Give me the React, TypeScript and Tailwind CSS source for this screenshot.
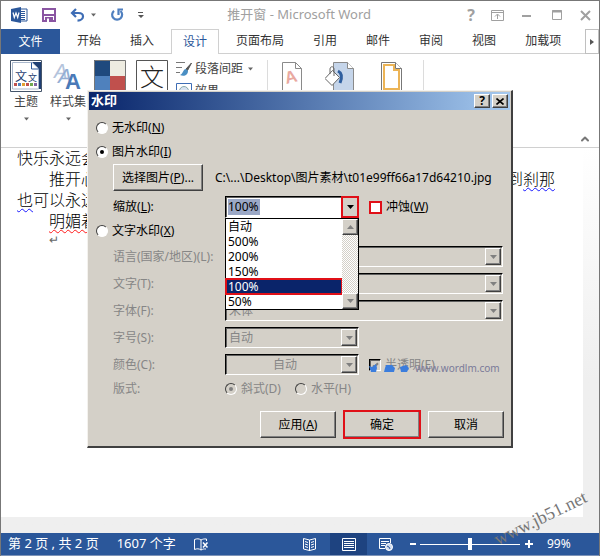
import { useState } from 'react';
import type { ReactNode } from 'react';
import { ChevronUp } from 'lucide-react';

const TABS = ['开始', '插入', '设计', '页面布局', '引用', '邮件', '审阅', '视图', '加载项'];
const SCALES = ['自动', '500%', '200%', '150%', '100%', '50%'];

// classic Windows bevels
const RAISED = 'bg-[#d4d0c8] border border-t-white border-l-white border-r-[#404040] border-b-[#404040] shadow-[inset_-1px_-1px_0_#808080]';
const SUNKEN = 'border border-t-black border-l-black border-r-white border-b-white shadow-[inset_1px_1px_0_#606060]';

function Caret({ className = 'text-[#666]', up = false }: { className?: string; up?: boolean }) {
  return (
    <svg width="7" height="4" viewBox="0 0 7 4" className={className} aria-hidden="true">
      <path d={up ? 'M0 4 3.5 0 7 4z' : 'M0 0h7L3.5 4z'} fill="currentColor" />
    </svg>
  );
}

function TitleBar() {
  return (
    <header className="flex h-7 items-center pl-2.5 pr-2 text-[#a0a0a0]">
      <div className="flex w-[120px] items-center">
        <svg width="17" height="16" viewBox="0 0 17 16" className="shrink-0" aria-hidden="true">
          <path d="M9 2h7v12H9z" fill="#fff" stroke="#2b579a" />
          <path d="M10 4.500h4M10 6.500h4M10 8.500h4M10 10.500h4M10 12.500h4" stroke="#2b579a" />
          <path d="M0 2 10 0v16L0 14z" fill="#2b579a" />
          <path d="M2 5.500 3.300 10.500 5 6l1.700 4.500L8 5.500" fill="none" stroke="#fff" strokeWidth="1.200" />
        </svg>
        <button aria-label="保存" className="ml-3.5">
          <svg width="14" height="14" viewBox="0 0 14 14">
            <path d="M1 1h12v12H1z" fill="#fff" stroke="#8a55a2" strokeWidth="2" />
            <path d="M1 7h12" stroke="#8a55a2" strokeWidth="2" />
            <path d="M3 9h8v5H3z" fill="#8a55a2" />
            <path d="M5 10.500h2V14H5z" fill="#fff" />
          </svg>
        </button>
        <button aria-label="撤消" className="ml-3.5 flex items-center gap-1.5">
          <svg width="15" height="14" viewBox="0 0 15 14" fill="none" stroke="#3e6db5" strokeWidth="2.200">
            <path d="M6 1 2 5l4 4" />
            <path d="M2 5h6.500c3 0 4.500 1.500 4.500 3.500S11 12.500 7.500 12.700" />
          </svg>
          <Caret className="w-[5px] text-[#666]" />
        </button>
        <button aria-label="重复" className="ml-3.5">
          <svg width="14" height="14" viewBox="0 0 14 14" fill="none" stroke="#4f7fbf" strokeWidth="2.200">
            <path d="M4 2.800A5 5 0 1 0 10.500 3" />
            <path d="M13 1.500H8.500V7" />
          </svg>
        </button>
        <button aria-label="自定义快速访问工具栏" className="ml-3.5 text-[#555]">
          <svg width="6" height="7" viewBox="0 0 6 7"><path d="M0 0h5v1H0zM0 3h6L3 6z" fill="currentColor" /></svg>
        </button>
      </div>
      <h1 className="flex-1 text-center text-[13px]">推开窗 - Microsoft Word</h1>
      <div className="flex items-center gap-4">
        <button aria-label="帮助" className="text-base font-bold leading-none">?</button>
        <button aria-label="功能区显示选项">
          <svg width="13" height="11" viewBox="0 0 13 11" fill="none" stroke="currentColor">
            <path d="M.5.5h12v10H.5zM.5 2.500h12M6.500 9V4.500M4 6.500l2.500-2.500L9 6.500" />
          </svg>
        </button>
        <button aria-label="最小化" className="px-0.5">
          <svg width="10" height="10" viewBox="0 0 10 10"><path d="M0 6h9" stroke="currentColor" strokeWidth="2" /></svg>
        </button>
        <button aria-label="最大化" className="px-0.5">
          <svg width="10" height="10" viewBox="0 0 10 10" fill="none" stroke="currentColor"><path d="M.5.5h9v9h-9z" /><path d="M0 1.500h10" strokeWidth="2" /></svg>
        </button>
        <button aria-label="关闭">
          <svg width="11" height="11" viewBox="0 0 11 11" stroke="currentColor" strokeWidth="2"><path d="M1 1l9 9M10 1l-9 9" /></svg>
        </button>
      </div>
    </header>
  );
}

function Tabs() {
  return (
    <nav className="flex h-[25px] items-stretch gap-[5px] border-b border-[#d0d0d0] text-[#333]">
      <button className="-mb-px w-[59px] bg-[#2b579a] text-white">文件</button>
      {TABS.map((t) => (
        <button
          key={t}
          className={t === '设计'
            ? '-mb-px border border-b-0 border-[#d0d0d0] bg-white px-[11px] pb-px text-[#2b579a]'
            : 'px-3'}
        >
          {t}
        </button>
      ))}
      <button aria-label="更多选项卡" className="-mb-px ml-auto flex w-3.5 items-center justify-center border border-[#c0c0c0]">
        <svg width="4" height="6" viewBox="0 0 4 6"><path d="M0 0 4 3 0 6z" fill="#555" /></svg>
      </button>
    </nav>
  );
}

function BigButton({ icon, label }: { icon: ReactNode; label?: string }) {
  return (
    <button className="flex flex-col items-center">
      {icon}
      {label && <span className="mt-px leading-[18px]">{label}</span>}
      {label && <Caret className="mt-1.5 w-[5px] text-[#666]" />}
    </button>
  );
}

function ThemeIcon() {
  return (
    <svg width="32" height="32" viewBox="0 0 32 32">
      <path d="M.5.5h31v31H.5z" fill="#fff" stroke="#44546a" />
      <path d="M22 2h9v27h-3V8z" fill="#1f3f73" />
      <path d="M2.500 2.500h19l7 6.500v20h-26z" fill="#fff" stroke="#aab8cc" />
      <path d="M21.500 2.500V9h7" fill="#fff" stroke="#2b579a" />
      <text x="5" y="21" fontSize="12" fill="#1f3f73">文</text>
      <text x="18" y="21" fontSize="9" fill="#1f3f73">文</text>
      <path d="M4 23h3v3H4z" fill="#c0504d" /><path d="M8 23h3v3H8z" fill="#4f81bd" />
      <path d="M12 23h3v3h-3z" fill="#e0a030" /><path d="M16 23h3v3h-3z" fill="#c0504d" />
      <path d="M20 23h3v3h-3z" fill="#6fa850" /><path d="M24 23h3v3h-3z" fill="#8064a2" />
    </svg>
  );
}

function StyleSetIcon() {
  return (
    <svg width="32" height="32" viewBox="0 0 32 32" fontFamily="Liberation Sans, sans-serif">
      <text x="2" y="18" fontSize="20" fontStyle="italic" fill="#b4c4dc">A</text>
      <text x="6" y="23" fontSize="21" fontStyle="italic" fill="#94aed4">A</text>
      <text x="13" y="29" fontSize="22" fontWeight="bold" fill="#4a7ab8">A</text>
    </svg>
  );
}

function Ribbon() {
  return (
    <div className="flex h-[94px] items-start gap-2 border-b border-[#d0d0d0] pl-[9px] pr-2 pt-1.5 text-[#444]">
      <BigButton icon={<ThemeIcon />} label="主题" />
      <BigButton icon={<StyleSetIcon />} label="样式集" />
      <BigButton
        icon={
          <svg width="32" height="32" viewBox="0 0 32 32">
            <path d="M0 0h16v16H0z" fill="#1f497d" /><path d="M16 0h16v16H16z" fill="#eeece1" />
            <path d="M0 16h16v16H0z" fill="#4f81bd" /><path d="M16 16h16v16H16z" fill="#c0504d" />
            <path d="M.5.5h31v31H.5z" fill="none" stroke="#777" />
          </svg>
        }
      />
      <BigButton
        icon={
          <svg width="34" height="32" viewBox="0 0 34 32">
            <path d="M2.500.5h31v31h-31z" fill="#fff" stroke="#555" />
            <text x="6" y="26" fontSize="24" fontWeight="300" fill="#222">文</text>
          </svg>
        }
      />
      <div className="flex flex-col">
        <button className="flex h-[18px] items-center gap-[3px]">
          <svg width="16" height="16" viewBox="0 0 16 16">
            <path d="M0 1.500h9M0 6.500h6M0 11.500h4" stroke="#777" />
            <path d="M15.500 2 10 8l1.500 1.500z" fill="#555" stroke="#555" />
            <path d="M10 8c-3 0-3 5-6 6 4 2 8 0 8-4z" fill="#4a8fc4" />
          </svg>
          段落间距
          <Caret className="ml-0.5 w-[5px] text-[#666]" />
        </button>
        <button className="mt-1 flex h-[18px] items-center gap-[3px]">
          <svg width="16" height="16" viewBox="0 0 16 16" fill="none">
            <path d="M.5.5h15v15H.5z" fill="#fff" stroke="#3e6db5" />
            <circle cx="8" cy="8" r="4.500" stroke="#8aa" fill="#d8e2f0" />
          </svg>
          效果
        </button>
      </div>
      <div className="ml-1.5 flex items-start">
        <div className="h-20 w-px bg-[#dcdcdc]" />
        <svg width="20" height="32" viewBox="0 0 20 32" className="ml-3.5" aria-label="水印">
          <path d="M.5 2.500h13l6 6v23H.5z" fill="#fff" stroke="#8a8a8a" />
          <path d="M13.500 2.500v6h6" fill="none" stroke="#8a8a8a" />
          <text x="3" y="23" fontSize="17" fill="#e9a9a0" fontFamily="Liberation Sans, sans-serif" fontWeight="bold" transform="rotate(-14 8 18)">A</text>
        </svg>
        <svg width="30" height="32" viewBox="0 0 30 32" className="ml-[23px]" aria-label="页面颜色">
          <path d="M8.500 2.500h14l6 6v23h-20z" fill="#c5d5ea" stroke="#8a8a8a" />
          <path d="M22.500 2.500v6h6" fill="#fff" stroke="#8a8a8a" />
          <path d="M13 11c4 2 4 7 2 12" fill="none" stroke="#2f5f9f" strokeWidth="3" />
          <path d="m7.500 10.500 7 7-7.500 8-7-7z" fill="#fff" stroke="#666" />
          <path d="M5 14V9c0-3 4-3 4 0v7" fill="none" stroke="#666" />
        </svg>
        <svg width="22" height="32" viewBox="0 0 22 32" className="ml-[26px]" aria-label="页面边框">
          <path d="M.5 2.500h14l6 6v23H.5z" fill="#fff" stroke="#777" />
          <path d="M3 5h10v5h5v19H3z" fill="none" stroke="#ecb456" strokeWidth="2" />
          <path d="M14.500 2.500v6h6" fill="#fff" stroke="#777" />
        </svg>
        <div className="ml-5 h-20 w-px bg-[#dcdcdc]" />
      </div>
      <button aria-label="折叠功能区" className="mb-0.5 ml-auto self-end text-[#777]">
        <ChevronUp size={12} strokeWidth={4} />
      </button>
    </div>
  );
}

function Page() {
  return (
    <main className="flex flex-1 bg-linear-to-b from-white to-[#efefef] to-60% pb-4 pr-4">
      <div className="flex-1 bg-white pl-4 pr-7 text-base font-light leading-[21px] text-black">
        <p>快乐永远会</p>
        <p className="flex justify-between pl-8">
          <span>推开心</span>
          <span>到<span className="underline decoration-[#1a1aff] decoration-wavy decoration-1 underline-offset-2">刹那</span></span>
        </p>
        <p><span className="underline decoration-[#1a1aff] decoration-wavy decoration-1 underline-offset-2">也</span>可以永远</p>
        <p className="pl-8"><span className="underline decoration-[#ff1a1a] decoration-wavy decoration-1 underline-offset-2">明媚着</span></p>
        <p className="pl-8 text-xs text-[#666]">↵</p>
      </div>
    </main>
  );
}

function StatusBar() {
  return (
    <footer className="flex h-[23px] items-center border-b border-[#7d93b8] bg-[#2b579a] pl-[7px] text-[13px] text-white">
      <span>第 2 页 , 共 2 页</span>
      <span className="ml-[18px]">1607 个字</span>
      <svg width="15" height="13" viewBox="0 0 15 13" fill="none" stroke="#fff" className="ml-[18px]" aria-label="校对">
        <path d="M7 12V2C5 .5 3 .5.500 1.500v10c2.500-1 4.500-1 6.500.5 2-1 3-1.200 5-1M7 2c2-1 3-1.200 5.500-1v2" />
        <path d="M9 4.500l4.500 5M13.500 4.500l-4.500 5" strokeWidth="1.500" />
      </svg>
      <div className="ml-auto flex h-full items-center">
        <button aria-label="阅读视图">
          <svg width="13" height="13" viewBox="0 0 13 13" fill="none" stroke="#fff">
            <path d="M6.500 2v11M.5.500l6 1.500 6-1.500v10.500l-6 1.500-6-1.500zM2 3.500l3 1M2 6l3 1M2 8.500l3 1M11 3.500l-3 1M11 6 8 7M11 8.500l-3 1" />
          </svg>
        </button>
        <button aria-label="页面视图" className="ml-3.5 flex h-full w-[37px] items-center justify-center bg-[#1e4380]">
          <svg width="14" height="13" viewBox="0 0 14 13" fill="none" stroke="#fff">
            <path d="M.5.5h13v12H.5zM2 3.500h10M2 5.500h10M2 7.500h10M2 9.500h10" />
          </svg>
        </button>
        <button aria-label="Web 版式视图" className="ml-3">
          <svg width="14" height="13" viewBox="0 0 14 13" fill="none" stroke="#fff">
            <path d="M6 10.500H.5V.5h11V5M2 3.500h8M2 5.500h5M2 7.500h4" />
            <circle cx="10" cy="9" r="3.500" fill="#cfdcf0" /><path d="M8 8l2 1 1 2" stroke="#2b579a" />
          </svg>
        </button>
        <button aria-label="缩小" className="ml-[17px] h-0.5 w-1.5 bg-white" />
        <input
          type="range"
          aria-label="缩放级别"
          defaultValue={50}
          className="mx-1 h-3 w-[100px] appearance-none bg-[linear-gradient(#fff,#fff)] bg-[length:100%_1px] bg-center bg-no-repeat [&::-webkit-slider-thumb]:h-3 [&::-webkit-slider-thumb]:w-1 [&::-webkit-slider-thumb]:appearance-none [&::-webkit-slider-thumb]:bg-white"
        />
        <button aria-label="放大" className="ml-px">
          <svg width="8" height="8" viewBox="0 0 8 8" stroke="#fff" strokeWidth="2"><path d="M4 0v8M0 4h8" /></svg>
        </button>
        <span className="ml-3.5 w-[52px] text-xs">99%</span>
      </div>
    </footer>
  );
}

function Key({ children }: { children: string }) {
  return <>(<span className="underline">{children}</span>)</>;
}

function Radio({ name, disabled, defaultChecked, children }: { name: string; disabled?: boolean; defaultChecked?: boolean; children: ReactNode }) {
  return (
    <label className={`flex items-center gap-1 ${disabled ? 'text-[#868686]' : ''}`}>
      <input
        type="radio"
        name={name}
        disabled={disabled}
        defaultChecked={defaultChecked}
        className="flex size-3 appearance-none items-center justify-center rounded-full border border-b-white border-l-[#404040] border-r-white border-t-[#404040] bg-white before:size-1 before:rounded-full checked:before:bg-black disabled:bg-[#d4d0c8] disabled:checked:before:bg-[#808080]"
      />
      <span>{children}</span>
    </label>
  );
}

// greyed out row of the text watermark section
function DisabledSelect({ id, label, value, short, centered }: { id: string; label: string; value: string; short?: boolean; centered?: boolean }) {
  return (
    <div className="flex h-[27px] items-center text-[#868686]">
      <label htmlFor={id} className="w-28 shrink-0">{label}</label>
      <div className={`flex h-[21px] p-px ${SUNKEN} ${short ? 'w-[134px]' : 'w-[278px]'}`}>
        <select id={id} disabled className={`min-w-0 flex-1 appearance-none opacity-100 ${centered ? 'pl-[46px]' : 'pl-0.5'}`}>
          <option>{value}</option>
        </select>
        <span className={`flex w-4 items-center justify-center ${RAISED}`}><Caret className="text-[#808080]" /></span>
      </div>
    </div>
  );
}

function ScaleCombo() {
  const [scale, setScale] = useState('100%');
  return (
    <div className="relative">
      <div className={`flex h-[22px] w-[134px] bg-white ${SUNKEN}`}>
        <div className="flex min-w-0 flex-1 items-center pl-0.5">
          <input id="scale" value={scale} onChange={(e) => setScale(e.target.value)} className="h-4 w-8 bg-[#9ba8c6] text-black outline-none" />
        </div>
        <button aria-label="展开" className="-my-px -mr-px flex w-[18px] items-center justify-center border-2 border-[#e01018] bg-[#d4d0c8]">
          <Caret className="text-black" />
        </button>
      </div>
      <div className="absolute left-0 top-[22px] z-10 flex w-[134px] border border-black bg-white">
        <ul role="listbox" aria-label="缩放" className="flex-1">
          {SCALES.map((s) => (
            <li
              key={s}
              role="option"
              aria-selected={s === scale}
              onClick={() => setScale(s)}
              className={`h-[15px] pl-0.5 leading-[15px] ${s === scale ? 'bg-[#0a246a] text-white outline-2 -outline-offset-1 outline-[#e01018]' : ''}`}
            >
              {s}
            </li>
          ))}
        </ul>
        <div className="flex w-4 flex-col justify-between bg-[repeating-conic-gradient(#d4d0c8_0_25%,#fff_0_50%)] bg-[length:2px_2px]">
          <span className={`flex h-4 items-center justify-center ${RAISED}`}><Caret up className="text-[#808080]" /></span>
          <span className={`flex h-4 items-center justify-center ${RAISED}`}><Caret className="text-[#808080]" /></span>
        </div>
      </div>
    </div>
  );
}

function WatermarkDialog() {
  return (
    <section role="dialog" aria-label="水印" className="w-[426px] border border-b-2 border-r-2 border-b-[#404040] border-l-[#f4f2ee] border-r-[#404040] border-t-[#f4f2ee] bg-[#d4d0c8] p-px text-black">
      <div className="flex h-[18px] items-center gap-0.5 bg-linear-to-r from-[#0a246a] to-[#a6caf0] px-0.5">
        <h2 className="flex-1 text-[13px] font-bold text-white">水印</h2>
        <button aria-label="帮助" className={`flex h-3.5 w-4 items-center justify-center text-xs font-bold ${RAISED}`}>?</button>
        <button aria-label="关闭" className={`flex h-3.5 w-4 items-center justify-center ${RAISED}`}>
          <svg width="8" height="7" viewBox="0 0 8 7" stroke="#000" strokeWidth="1.600"><path d="M.5.5l7 6M7.500.5l-7 6" /></svg>
        </button>
      </div>

      <div className="px-1.5 pb-[7px] pt-1.5">
        <div className="flex h-6 items-center pl-px"><Radio name="kind">无水印<Key>N</Key></Radio></div>
        <div className="flex h-6 items-center pl-px"><Radio name="kind" defaultChecked>图片水印<Key>I</Key></Radio></div>
        <div className="flex items-center gap-3 pl-[18px]">
          <button className={`h-[27px] w-[90px] shrink-0 ${RAISED}`}>选择图片<Key>P</Key>...</button>
          <span className="whitespace-nowrap">C:\...\Desktop\图片素材\t01e99ff66a17d64210.jpg</span>
        </div>
        <div className="mt-1 flex h-6 items-center pl-[18px]">
          <label htmlFor="scale" className="w-28 shrink-0">缩放<Key>L</Key>:</label>
          <ScaleCombo />
          <label className="ml-2.5 flex items-center gap-1">
            <input type="checkbox" className="size-[13px] appearance-none border-2 border-[#e01018] bg-white" />
            <span>冲蚀<Key>W</Key></span>
          </label>
        </div>
        <div className="flex h-6 items-center pl-px"><Radio name="kind">文字水印<Key>X</Key></Radio></div>
        <div className="pl-[18px]">
          <DisabledSelect id="lang" label="语言(国家/地区)(L):" value="" />
          <DisabledSelect id="text" label="文字(T):" value="" />
          <DisabledSelect id="font" label="字体(F):" value="宋体" />
          <DisabledSelect id="size" label="字号(S):" value="自动" short />
          <div className="flex items-center">
            <DisabledSelect id="color" label="颜色(C):" value="自动" short centered />
            <div className="relative ml-2.5">
              <label className="flex items-center gap-1 text-[#868686]">
                <input
                  type="checkbox"
                  disabled
                  defaultChecked
                  className={`flex size-3 appearance-none items-center justify-center before:h-1.5 before:w-[3px] before:rotate-45 before:border-b-2 before:border-r-2 before:border-[#808080] ${SUNKEN}`}
                />
                <span>半透明(E)</span>
              </label>
              <div className="absolute left-0 top-1 flex h-4 items-center gap-1.5 text-[10px] text-[#7a7a99]">
                <svg width="40" height="9" viewBox="0 0 40 9" fill="#3b7ddd" aria-hidden="true">
                  <path d="M0 2l3 1 4-3 1 4-1 4H2zM17 1h6l3 3-1 4H15l1-4zM31 3l6-2 3 3-2 4h-6z" />
                </svg>
                <span className="whitespace-nowrap">www.wordlm.com</span>
              </div>
            </div>
          </div>
          <div className="flex h-[22px] items-center text-[#868686]">
            <span className="w-28">版式:</span>
            <Radio name="layout" disabled defaultChecked>斜式(D)</Radio>
            <div className="ml-3.5"><Radio name="layout" disabled>水平(H)</Radio></div>
          </div>
        </div>
        <div className="mt-[11px] flex justify-end gap-2">
          <button className={`h-[27px] w-[76px] ${RAISED}`}>应用<Key>A</Key></button>
          <button className={`h-[27px] w-[76px] outline-2 -outline-offset-1 outline-[#e01018] ${RAISED}`}>确定</button>
          <button className={`h-[27px] w-[76px] ${RAISED}`}>取消</button>
        </div>
      </div>
    </section>
  );
}

export default function App() {
  return (
    <div className="relative flex min-h-screen flex-col border border-b-0 border-[#777] bg-white font-['Noto_Sans','Noto_Sans_CJK_SC',sans-serif] text-xs">
      <TitleBar />
      <Tabs />
      <Ribbon />
      <Page />
      <StatusBar />
      <div className="absolute inset-x-0 top-[89px] flex justify-center">
        <WatermarkDialog />
      </div>
      <div className="pointer-events-none absolute bottom-6 right-2 -rotate-26 font-['Liberation_Serif',serif] text-lg text-[#777]">www.jb51.net</div>
    </div>
  );
}
